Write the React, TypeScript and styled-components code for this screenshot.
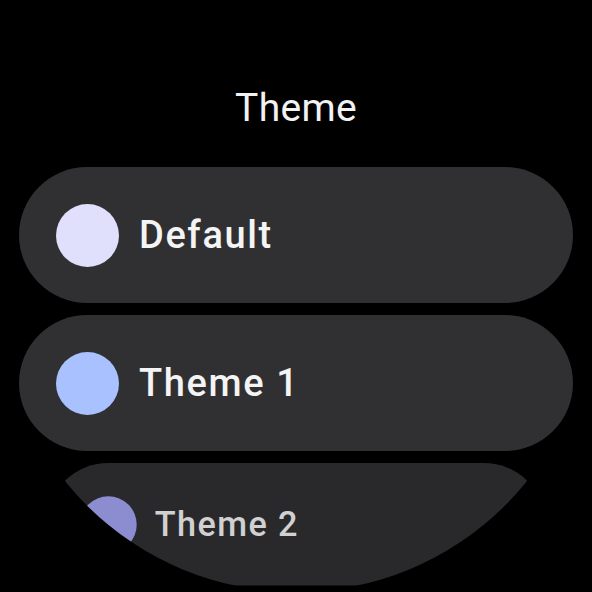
import styled, { createGlobalStyle } from "styled-components";

const GlobalStyle = createGlobalStyle`
    html, body {
        margin: 0;
        padding: 0;
        background: #000;
    }
    body {
        font-family: Roboto, "Noto Sans", Arial, sans-serif;
    }
`;

const Screen = styled.div`
    width: 592px;
    height: 592px;
    border-radius: 50%;
    overflow: hidden;
    background: #000;
    display: flex;
    flex-direction: column;
    align-items: center;
    padding-top: 84px;
    box-sizing: border-box;
`;

const Title = styled.h1`
    margin: 0 0 35px;
    height: 48px;
    line-height: 48px;
    font-size: 39px;
    font-weight: 400;
    letter-spacing: 0.3px;
    color: #f2f2f2;
    text-align: center;
`;

const ChipList = styled.div`
    display: flex;
    flex-direction: column;
    gap: 12px;
    width: 554px;
`;

const Chip = styled.button<{ $faded?: boolean }>`
    display: flex;
    align-items: center;
    gap: 20px;
    height: 136px;
    flex-shrink: 0;
    padding: 0 0 0 37px;
    border: none;
    border-radius: 68px;
    background: #303033;
    font-family: inherit;
    text-align: left;
    cursor: pointer;
    transform-origin: top center;
    transform: ${(p) => (p.$faded ? "scale(0.9)" : "none")};
    opacity: ${(p) => (p.$faded ? 0.86 : 1)};
`;

const Swatch = styled.span<{ $color: string }>`
    width: 63px;
    height: 63px;
    border-radius: 50%;
    background: ${(p) => p.$color};
    flex-shrink: 0;
`;

const Label = styled.span`
    font-size: 38px;
    font-weight: 500;
    letter-spacing: 1.6px;
    color: #f4f4f4;
`;

const themes = [
    { name: "Default", color: "#e0e0fc" },
    { name: "Theme 1", color: "#a9c2ff" },
    { name: "Theme 2", color: "#a4a4f4" },
];

export default function App() {
    return (
        <>
            <GlobalStyle />
            <Screen>
                <Title>Theme</Title>
                <ChipList>
                    {themes.map((t, i) => (
                        <Chip key={t.name} $faded={i === 2}>
                            <Swatch $color={t.color} />
                            <Label>{t.name}</Label>
                        </Chip>
                    ))}
                </ChipList>
            </Screen>
        </>
    );
}
